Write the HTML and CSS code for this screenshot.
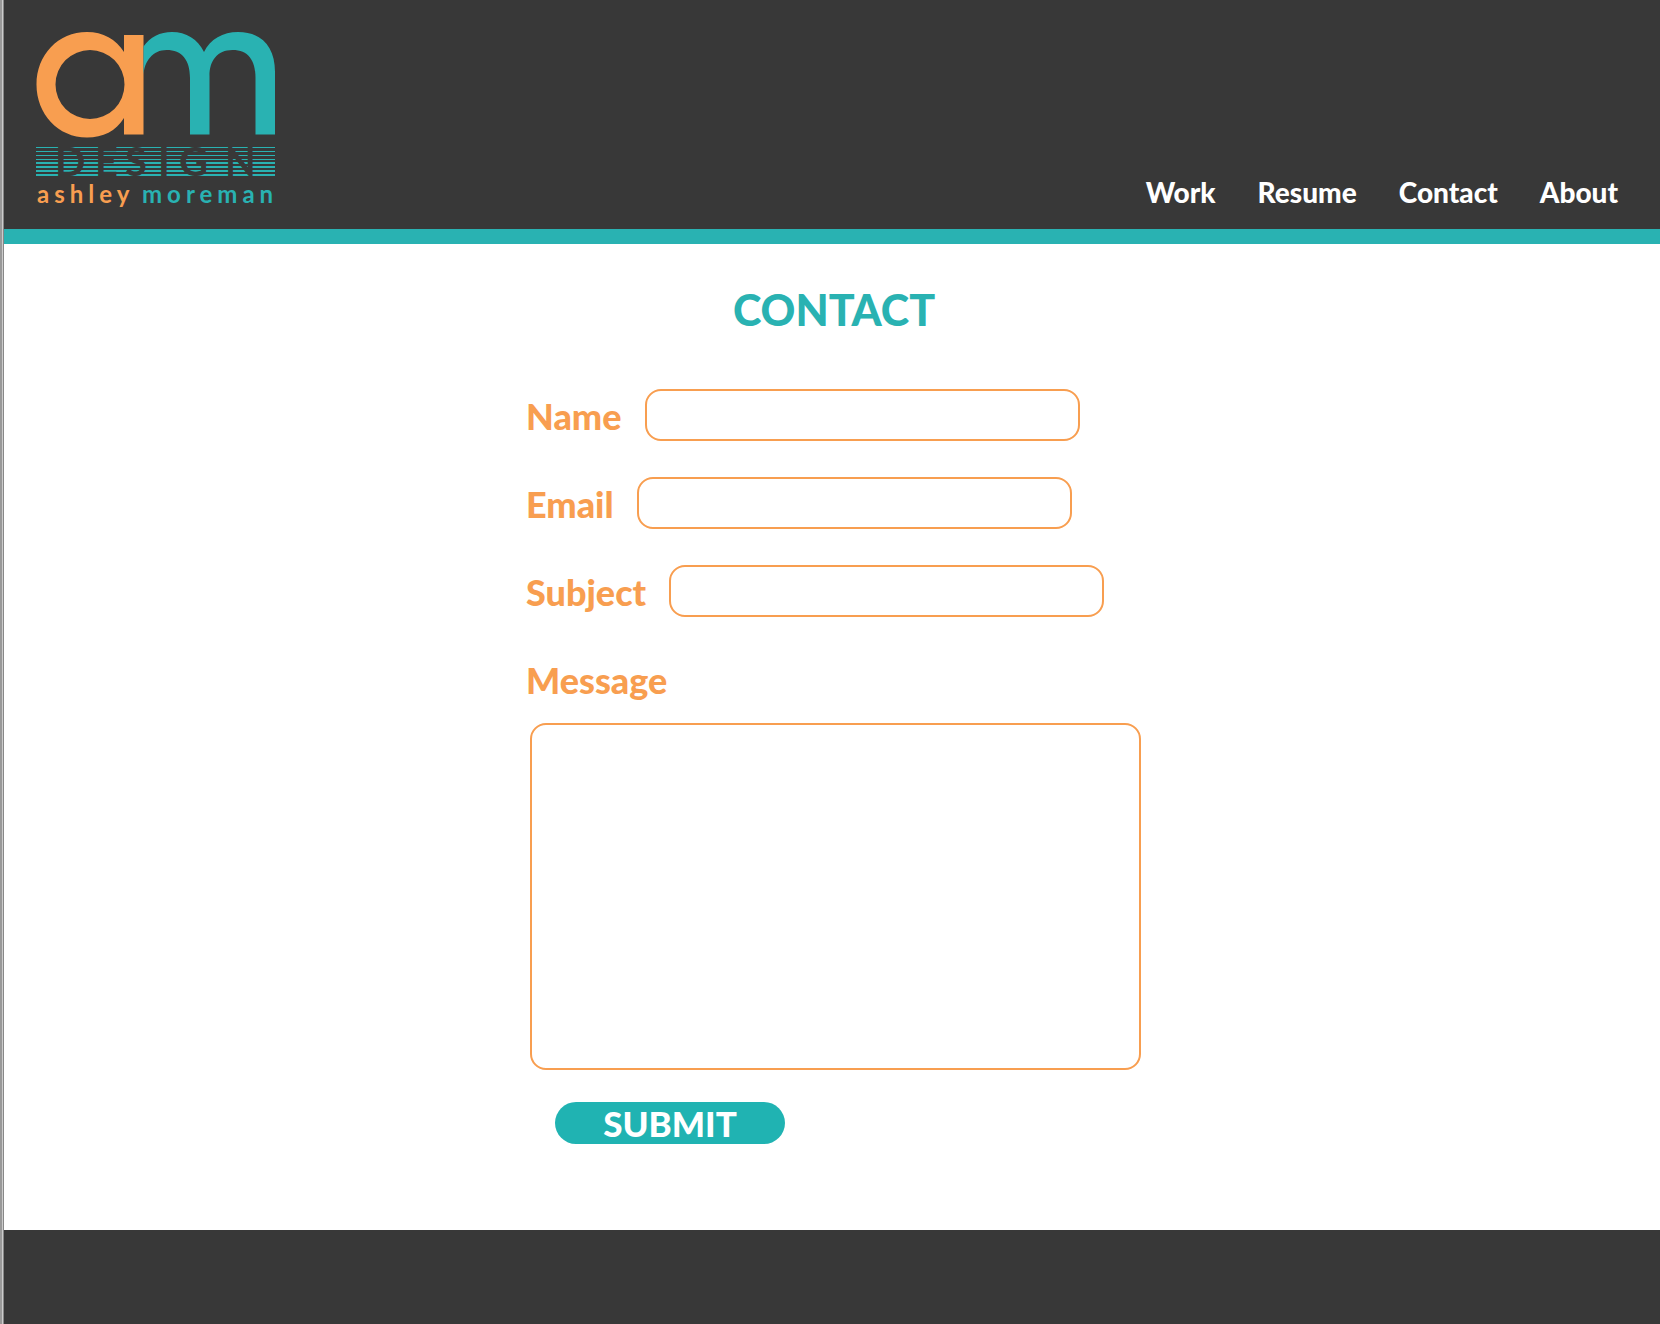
FILE: index.html
```html
<!DOCTYPE html>
<html lang="en">
<head>
  <meta charset="utf-8">
  <meta name="viewport" content="width=device-width, initial-scale=1">
  <title>Contact | AM Design</title>
  <link rel="stylesheet" href="styles.css">
</head>
<body>
  <header class="site-header">
    <a class="logo" href="#" aria-label="AM Design, Ashley Moreman">
      <svg class="logo-art" viewBox="0 0 260 176" width="260" height="176">
        <path class="orange" fill-rule="evenodd" d="M88 3H107.500V102.500H88V86C80 99 67 105.500 51 105.500C22 105.500 0.500 82 0.500 52.500C0.500 23 22 0 51 0C67 0 80 7 88 20ZM54 18A34.500 34.500 0 1 0 54 87A34.500 34.500 0 1 0 54 18Z"/>
        <path class="teal" d="M107.500 14.500C114 5 124 0 136 0C150 0 162 7 168 20C174 7 187 0 202 0C226 0 239 15 239 40V102.500H219.500V46C219.500 28 212 18 196.500 18C181 18 173.500 29 173.500 44V102.500H154V46C154 28 146 18 130.500 18C117 18 108 29 107.500 44Z"/>
        <path class="teal" d="M0 115h239v1H0zM0 119h239v1H0zM0 123h239v1H0zM0 127h239v1H0zM0 130h239v2H0zM0 134h239v2H0zM0 138h239v2H0zM0 142h239v2H0z"/>
        <text class="design" x="19 59 89 122 143 189" y="144">DESIGN</text>
        <text class="name orange" x="1" y="171">ashley</text>
        <text class="name teal" x="106" y="171">moreman</text>
      </svg>
    </a>
    <nav class="site-nav">
      <a href="#">Work</a>
      <a href="#">Resume</a>
      <a href="#">Contact</a>
      <a href="#">About</a>
    </nav>
  </header>
  <main class="content">
    <h1 class="title">CONTACT</h1>
    <form class="contact-form">
      <div class="field">
        <label for="name">Name</label>
        <input id="name" name="name" type="text">
      </div>
      <div class="field">
        <label for="email">Email</label>
        <input id="email" name="email" type="email">
      </div>
      <div class="field">
        <label for="subject">Subject</label>
        <input id="subject" name="subject" type="text">
      </div>
      <div class="message">
        <label for="message">Message</label>
        <textarea id="message" name="message"></textarea>
      </div>
      <button class="submit" type="submit">SUBMIT</button>
    </form>
  </main>
  <footer class="site-footer"></footer>
</body>
</html>
```
FILE: styles.css
```css
* {
  box-sizing: border-box;
}

body {
  display: flex;
  flex-direction: column;
  min-height: 100vh;
  margin: 0;
  padding-left: 4px;
  background: linear-gradient(to right, #999 2px, #ccc 2px 3px, #888 3px 4px, #fff 4px);
  font-family: Lato, "Open Sans", sans-serif;
  font-weight: 900;
}

.site-header {
  display: flex;
  align-items: flex-end;
  justify-content: space-between;
  padding: 32px 42px 21px 32px;
  border-bottom: 15px solid #29b2b2;
  background: #383838;
}

.logo-art {
  display: block;
}

.orange {
  fill: #f89e50;
}

.teal {
  fill: #29b2b2;
}

.design {
  fill: #383838;
  font-size: 40px;
  font-weight: 700;
}

.name {
  font-size: 24px;
  font-weight: 700;
  letter-spacing: 5px;
}

.site-nav {
  display: flex;
  gap: 42px;
  font-size: 28px;
  line-height: 32px;
}

.site-nav a {
  color: #fff;
  text-decoration: none;
}

.content {
  flex: 1;
  padding: 40px 0 86px 4px;
}

.title {
  margin: 0 0 53px;
  color: #29b2b2;
  font-size: 43px;
  font-weight: 900;
  line-height: 52px;
  text-align: center;
}

.contact-form {
  width: 616px;
  max-width: 100%;
  margin: 0 auto;
  color: #f89e50;
  font-size: 36px;
  line-height: 54px;
}

.field {
  display: flex;
  gap: 23px;
  margin-bottom: 34px;
}

.field input,
.message textarea {
  border: 2px solid #f89e50;
  border-radius: 16px;
  padding: 8px 16px;
  background: #fff;
  color: #383838;
  font: inherit;
  font-size: 24px;
}

.field input {
  width: 435px;
  height: 52px;
}

.message label {
  display: block;
}

.message textarea {
  display: block;
  width: 611px;
  height: 347px;
  margin: 16px 0 32px 4px;
  resize: none;
}

.submit {
  display: block;
  width: 230px;
  height: 42px;
  margin-left: 29px;
  border: 0;
  border-radius: 21px;
  padding: 0;
  background: #20b3b2;
  color: #fff;
  font: inherit;
  font-size: 35px;
  line-height: 40px;
}

.site-footer {
  height: 94px;
  background: #383838;
}
```
